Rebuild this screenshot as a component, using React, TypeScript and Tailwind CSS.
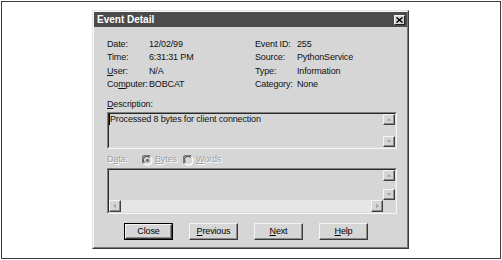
import React from "react";

const font = { fontFamily: '"Liberation Sans", Arial, sans-serif' };

function U({ children }: { children: React.ReactNode }) {
  return <span className="underline underline-offset-[1px] decoration-[1px]">{children}</span>;
}

function Arrow({ dir }: { dir: "up" | "down" | "left" | "right" }) {
  const pts =
    dir === "up"
      ? "3,7 6,4 9,7"
      : dir === "down"
      ? "3,4 6,7 9,4"
      : dir === "left"
      ? "7,3 4,6 7,9"
      : "5,3 8,6 5,9";
  return (
    <svg width="12" height="11" viewBox="0 0 12 11" className="block">
      <polygon points={pts} fill="#a0a0a0" />
    </svg>
  );
}

function SBtn({ dir, cls = "" }: { dir: "up" | "down" | "left" | "right"; cls?: string }) {
  return (
    <div
      className={
        "flex items-center justify-center bg-[#d6d6d6] border-t border-l border-t-[#f4f4f4] border-l-[#f4f4f4] border-r border-b border-r-[#404040] border-b-[#404040] shadow-[inset_-1px_-1px_0_#8a8a8a] " +
        cls
      }
    >
      <Arrow dir={dir} />
    </div>
  );
}

function Sunken({ children, cls = "" }: { children: React.ReactNode; cls?: string }) {
  return (
    <div className={"border border-t-[#808080] border-l-[#808080] border-r-[#f4f4f4] border-b-[#f4f4f4] " + cls}>
      <div className="h-full w-full border border-t-[#2a2a2a] border-l-[#2a2a2a] border-r-[#dcdcdc] border-b-[#dcdcdc] bg-[#d6d6d6]">
        {children}
      </div>
    </div>
  );
}

function Radio({ checked }: { checked?: boolean }) {
  return (
    <svg width="11" height="11" viewBox="0 0 11 11" className="block">
      <circle cx="5.5" cy="5.5" r="4.5" fill="#d6d6d6" />
      <path d="M1.3 8.2 A4.5 4.5 0 0 1 8.2 1.3" stroke="#6a6a6a" strokeWidth="1.3" fill="none" />
      <path d="M2.3 7.4 A3.4 3.4 0 0 1 7.4 2.3" stroke="#303030" strokeWidth="1" fill="none" />
      <path d="M2.5 8.7 A4 4 0 0 0 8.7 2.5" stroke="#ffffff" strokeWidth="1.3" fill="none" />
      {checked && <circle cx="5.5" cy="5.5" r="1.8" fill="#7a7a7a" />}
    </svg>
  );
}

function Btn({ children, def }: { children: React.ReactNode; def?: boolean }) {
  const inner = (
    <div className="h-full w-full flex items-center justify-center bg-[#d6d6d6] border-t border-l border-t-[#f4f4f4] border-l-[#f4f4f4] border-r border-b border-r-[#3a3a3a] border-b-[#3a3a3a] shadow-[inset_-1px_-1px_0_#8a8a8a] text-[9px] tracking-[-0.15px] text-black">
      {children}
    </div>
  );
  return def ? (
    <div className="w-[49px] h-[17px] border border-black">{inner}</div>
  ) : (
    <div className="w-[49px] h-[17px]">{inner}</div>
  );
}

const dis = "text-[#a0a0a0] [text-shadow:1px_1px_0_#ffffff]";

export default function App() {
  return (
    <div className="w-[502px] h-[260px] bg-white p-[1px]" style={font}>
      <div className="w-[500px] h-[258px] border border-[#3c3c3c] bg-white">
        <div className="ml-[90px] mt-[8px] w-[317px] h-[239px] bg-[#d6d6d6] border border-t-[#e2e2e2] border-l-[#e2e2e2] border-r-[#3a3a3a] border-b-[#3a3a3a]">
          <div className="h-full w-full border border-t-[#fafafa] border-l-[#fafafa] border-r-[#7a7a7a] border-b-[#7a7a7a] flex flex-col">
            {/* title bar */}
            <div className="h-[15px] bg-[#4b4b4b] flex items-center justify-between pl-[3px] pr-[2px]">
              <span className="text-white font-bold text-[10px] leading-none tracking-[0px]">Event Detail</span>
              <div className="w-[11px] h-[10px] bg-[#d6d6d6] border-t border-l border-t-[#f4f4f4] border-l-[#f4f4f4] border-r border-b border-r-[#202020] border-b-[#202020] flex items-center justify-center">
                <svg width="7" height="6" viewBox="0 0 7 6">
                  <path d="M0.5 0.5 L6.5 5.5 M6.5 0.5 L0.5 5.5" stroke="#000" strokeWidth="1.5" />
                </svg>
              </div>
            </div>
            {/* body */}
            <div className="pl-[13px] pt-[11px] text-[9px] tracking-[-0.15px] text-[#111]">
              <div className="grid grid-cols-[42px_106px_42px_1fr] leading-[13.3px]">
                <span>Date:</span>
                <span>12/02/99</span>
                <span>Event ID:</span>
                <span>255</span>
                <span>Time:</span>
                <span>6:31:31 PM</span>
                <span>Source:</span>
                <span>PythonService</span>
                <span>
                  <U>U</U>ser:
                </span>
                <span>N/A</span>
                <span>Type:</span>
                <span>Information</span>
                <span>
                  Co<U>m</U>puter:
                </span>
                <span>BOBCAT</span>
                <span>Category:</span>
                <span>None</span>
              </div>
              <div className="mt-[7px] leading-[13.3px]">
                <U>D</U>escription:
              </div>
              <Sunken cls="mt-[1px] w-[290px] h-[37px]">
                <div className="flex h-full">
                  <div className="flex-1 leading-[11px] flex items-start">
                    <span className="inline-block w-px h-[11px] bg-black" />
                    <span>Processed 8 bytes for client connection</span>
                  </div>
                  <div className="w-[12px] flex flex-col justify-between">
                    <SBtn dir="up" cls="h-[11px]" />
                    <SBtn dir="down" cls="h-[11px]" />
                  </div>
                </div>
              </Sunken>
              <div className={"mt-[4px] h-[13.3px] flex items-center " + dis}>
                <span className="w-[35px]">
                  D<U>a</U>ta:
                </span>
                <Radio checked />
                <span className="ml-[2px] w-[28px]">
                  <U>B</U>ytes
                </span>
                <Radio />
                <span className="ml-[2px]">
                  <U>W</U>ords
                </span>
              </div>
              <Sunken cls="mt-[1px] w-[290px] h-[46px]">
                <div className="flex flex-col h-full">
                  <div className="flex flex-1">
                    <div className="flex-1" />
                    <div className="w-[12px] flex flex-col">
                      <SBtn dir="up" cls="h-[11px]" />
                      <div className="flex-1" />
                      <SBtn dir="down" cls="h-[11px]" />
                    </div>
                  </div>
                  <div className="flex h-[12px]">
                    <SBtn dir="left" cls="w-[12px]" />
                    <div className="flex-1 bg-[#e6e6e6]" />
                    <SBtn dir="right" cls="w-[12px]" />
                    <div className="w-[12px] bg-[#d6d6d6]" />
                  </div>
                </div>
              </Sunken>
              <div className="mt-[9px] ml-[17px] flex gap-[16px]">
                <Btn def>Close</Btn>
                <Btn>
                  <U>P</U>revious
                </Btn>
                <Btn>
                  <U>N</U>ext
                </Btn>
                <Btn>
                  <U>H</U>elp
                </Btn>
              </div>
            </div>
          </div>
        </div>
      </div>
    </div>
  );
}
